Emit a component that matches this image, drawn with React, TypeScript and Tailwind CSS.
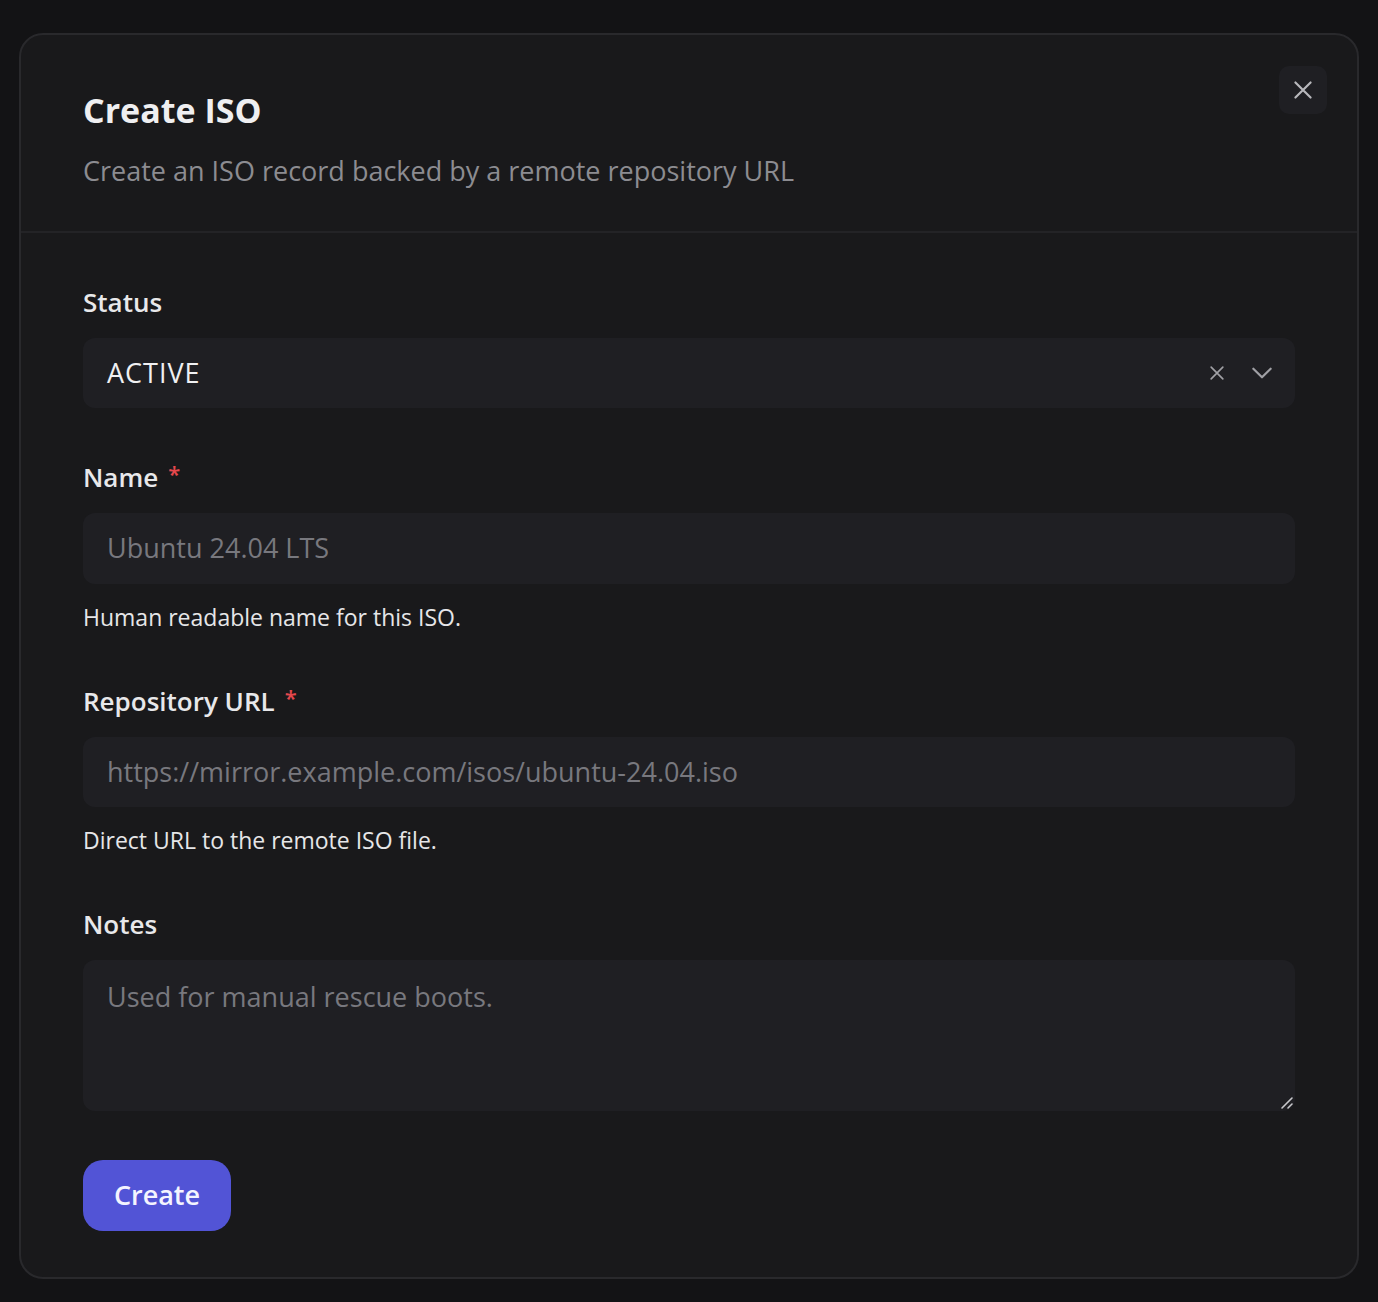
import React from "react";

const font = { fontFamily: "'Open Sans', Lato, sans-serif" };

function XIcon({ size = 22, stroke = 2 }: { size?: number; stroke?: number }) {
  return (
    <svg width={size} height={size} viewBox="0 0 24 24" fill="none" stroke="currentColor" strokeWidth={stroke} strokeLinecap="round">
      <path d="M5 5 L19 19 M19 5 L5 19" />
    </svg>
  );
}

function Label({ text, required }: { text: string; required?: boolean }) {
  return (
    <div className="flex items-center gap-[10px] text-[26px] leading-[32px] font-semibold text-[#e8e8ea] mb-[20px]">
      <span>{text}</span>
      {required && <span className="text-[#e5484d] text-[22px] leading-none -mt-[8px]">*</span>}
    </div>
  );
}

function Helper({ text }: { text: string }) {
  return <div className="mt-[18px] text-[23px] leading-[30px] text-[#e6e6e8]">{text}</div>;
}

export default function App() {
  return (
    <div className="min-h-screen bg-[#131315] pt-[33px] px-[19px] pb-[23px]" style={font}>
      <div className="relative rounded-[24px] border-2 border-[#29292c] bg-[#19191b]">
        <div className="px-[62px] pt-[53px] pb-[42px] border-b-2 border-[#232326]">
          <h1 className="text-[34px] leading-[44px] font-bold text-[#efeff1]">Create ISO</h1>
          <p className="mt-[21px] text-[27px] leading-[36px] text-[#8c8c91]">Create an ISO record backed by a remote repository URL</p>
        </div>
        <button className="absolute top-[31px] right-[30px] w-[48px] h-[48px] rounded-[10px] bg-[#1f1f23] flex items-center justify-center text-[#b8b8bc]">
          <XIcon size={26} stroke={2} />
        </button>

        <div className="px-[62px] pt-[53px] pb-[46px]">
          <div>
            <Label text="Status" />
            <div className="h-[70px] rounded-[12px] bg-[#1f1f23] flex items-center pl-[24px] pr-[20px]">
              <span className="flex-1 text-[27px] tracking-[1px] text-[#f0f0f2]">ACTIVE</span>
              <span className="text-[#a0a0a5] mr-[22px]"><XIcon size={20} stroke={2} /></span>
              <svg width="26" height="26" viewBox="0 0 24 24" fill="none" stroke="#a0a0a5" strokeWidth="2" strokeLinecap="round" strokeLinejoin="round">
                <path d="M4 8 L12 16 L20 8" />
              </svg>
            </div>
          </div>

          <div className="mt-[53px]">
            <Label text="Name" required />
            <div className="h-[71px] rounded-[12px] bg-[#1f1f23] flex items-center px-[24px] text-[27px] text-[#78787e]">
              Ubuntu 24.04 LTS
            </div>
            <Helper text="Human readable name for this ISO." />
          </div>

          <div className="mt-[53px]">
            <Label text="Repository URL" required />
            <div className="h-[70px] rounded-[12px] bg-[#1f1f23] flex items-center px-[24px] text-[27px] text-[#78787e]">
              https://mirror.example.com/isos/ubuntu-24.04.iso
            </div>
            <Helper text="Direct URL to the remote ISO file." />
          </div>

          <div className="mt-[53px]">
            <Label text="Notes" />
            <div className="relative h-[151px] rounded-[12px] bg-[#1f1f23] px-[24px] pt-[17px] text-[27px] text-[#78787e]">
              Used for manual rescue boots.
              <svg className="absolute right-[1px] bottom-[1px]" width="16" height="16" viewBox="0 0 16 16" stroke="#c8c8cc" strokeWidth="1.6" strokeLinecap="round">
                <path d="M4 14 L14 4 M10 14 L14 10" />
              </svg>
            </div>
          </div>

          <button className="mt-[49px] w-[148px] h-[71px] rounded-[20px] bg-[#5254d6] text-[27px] font-semibold text-[#f4f4ff]">
            Create
          </button>
        </div>
      </div>
    </div>
  );
}
